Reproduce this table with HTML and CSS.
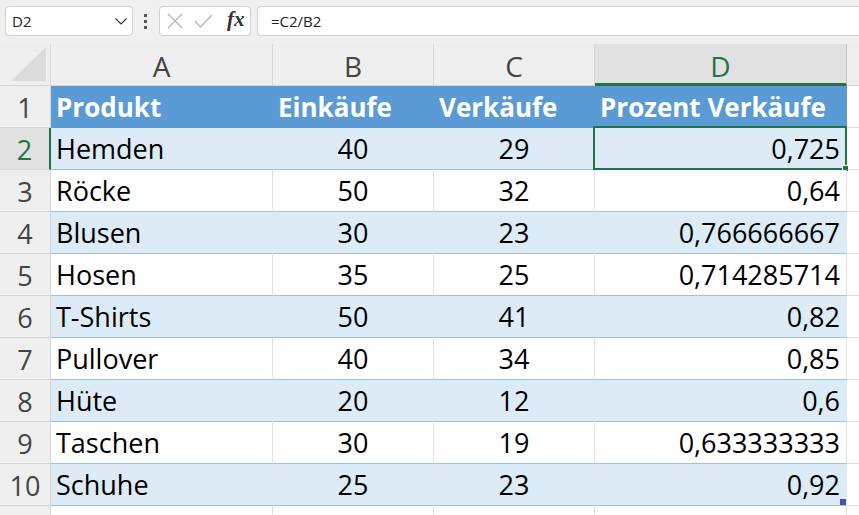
FILE: index.html
```html
<!DOCTYPE html>
<html lang="de">
<head>
<meta charset="utf-8">
<title>Tabelle</title>
<link rel="stylesheet" href="styles.css">
</head>
<body>
<div class="toolbar">
  <div class="namebox">
    <span class="nb-text">D2</span>
    <svg class="chev" width="12" height="7" viewBox="0 0 12 7"><path d="M0.5 0.5 L6 6 L11.5 0.5" fill="none" stroke="#333" stroke-width="1.1"/></svg>
  </div>
  <div class="dots"><i></i><i></i><i></i></div>
  <div class="fxbox">
    <svg class="xicon" width="16" height="16" viewBox="0 0 16 16"><path d="M1 1 L15 15 M15 1 L1 15" stroke="#b5b5b5" stroke-width="1.3" fill="none"/></svg>
    <svg class="check" width="19" height="14" viewBox="0 0 19 14"><path d="M1 7 L6.5 13 L18 1" stroke="#b5b5b5" stroke-width="1.3" fill="none"/></svg>
    <span class="fx">fx</span>
  </div>
  <div class="formula">=C2/B2</div>
</div>

<div class="sheet">
  <div class="corner"><svg width="36" height="35" viewBox="0 0 36 35"><path d="M0 34 L35 34 L35 0 Z" fill="#dcdcdc"/></svg></div>
  <div class="ch">A</div>
  <div class="ch">B</div>
  <div class="ch">C</div>
  <div class="ch sel">D</div>
  <div class="ch end"></div>

  <div class="rh">1</div>
  <div class="c hdr l">Produkt</div>
  <div class="c hdr l">Einkäufe</div>
  <div class="c hdr l">Verkäufe</div>
  <div class="c hdr l">Prozent Verkäufe</div>
  <div class="e"></div>

  <div class="rh sel">2</div>
  <div class="c band l">Hemden</div>
  <div class="c band m">40</div>
  <div class="c band m">29</div>
  <div class="c band r active">0,725<span class="selbox"><span class="handle"></span></span></div>
  <div class="e"></div>

  <div class="rh">3</div>
  <div class="c l">Röcke</div>
  <div class="c m">50</div>
  <div class="c m">32</div>
  <div class="c r">0,64</div>
  <div class="e"></div>

  <div class="rh">4</div>
  <div class="c band l">Blusen</div>
  <div class="c band m">30</div>
  <div class="c band m">23</div>
  <div class="c band r">0,766666667</div>
  <div class="e"></div>

  <div class="rh">5</div>
  <div class="c l">Hosen</div>
  <div class="c m">35</div>
  <div class="c m">25</div>
  <div class="c r">0,714285714</div>
  <div class="e"></div>

  <div class="rh">6</div>
  <div class="c band l">T-Shirts</div>
  <div class="c band m">50</div>
  <div class="c band m">41</div>
  <div class="c band r">0,82</div>
  <div class="e"></div>

  <div class="rh">7</div>
  <div class="c l">Pullover</div>
  <div class="c m">40</div>
  <div class="c m">34</div>
  <div class="c r">0,85</div>
  <div class="e"></div>

  <div class="rh">8</div>
  <div class="c band l">Hüte</div>
  <div class="c band m">20</div>
  <div class="c band m">12</div>
  <div class="c band r">0,6</div>
  <div class="e"></div>

  <div class="rh">9</div>
  <div class="c l">Taschen</div>
  <div class="c m">30</div>
  <div class="c m">19</div>
  <div class="c r">0,633333333</div>
  <div class="e"></div>

  <div class="rh">10</div>
  <div class="c band l">Schuhe</div>
  <div class="c band m">25</div>
  <div class="c band m">23</div>
  <div class="c band r last">0,92<span class="resize"></span></div>
  <div class="e"></div>

  <div class="rh"></div>
  <div class="c empty"></div>
  <div class="c empty"></div>
  <div class="c empty"></div>
  <div class="c empty"></div>
  <div class="e"></div>
</div>
</body>
</html>
```

FILE: styles.css
```css
* { box-sizing: border-box; }
html, body {
  margin: 0;
  padding: 0;
  width: 859px;
  height: 515px;
  overflow: hidden;
  background: #ffffff;
  font-family: "Open Sans", "Liberation Sans", sans-serif;
}

/* ---------- toolbar ---------- */
.toolbar {
  height: 44px;
  background: #f0f0f0;
  display: flex;
  align-items: flex-start;
  padding: 6px 0 0 5px;
}
.namebox {
  width: 128px;
  height: 30px;
  background: #fff;
  border: 1px solid #d2d2d2;
  border-radius: 4px;
  display: flex;
  align-items: center;
  justify-content: space-between;
  padding: 0 5px 0 6px;
}
.nb-text {
  font-size: 15px;
  color: #222;
}
.chev { margin-top: 1px; }
.dots {
  width: 26px;
  height: 30px;
  display: flex;
  flex-direction: column;
  align-items: center;
  justify-content: center;
  gap: 3px;
  padding-right: 2px;
}
.dots i {
  width: 3px;
  height: 3px;
  background: #555;
  display: block;
}
.fxbox {
  width: 92px;
  height: 30px;
  background: #fff;
  border: 1px solid #d2d2d2;
  border-radius: 4px;
  display: flex;
  align-items: center;
  padding-left: 7px;
}
.xicon { margin-right: 11px; }
.check { margin-right: 14px; }
.fx {
  font-family: "Liberation Serif", "DejaVu Serif", serif;
  font-style: italic;
  font-weight: 700;
  font-size: 21px;
  color: #333;
  line-height: 1;
  margin-top: -3px;
}
.formula {
  margin-left: 6px;
  flex: 1;
  height: 30px;
  background: #fff;
  border: 1px solid #d2d2d2;
  border-right: none;
  border-radius: 4px 0 0 4px;
  display: flex;
  align-items: center;
  padding-left: 13px;
  font-size: 15px;
  color: #222;
}

/* ---------- sheet ---------- */
.sheet {
  display: grid;
  grid-template-columns: 51px 222px 161px 161px 252px 1fr;
  grid-template-rows: 42px repeat(11, 42px);
}
.corner {
  background: #efefef;
  border-right: 1px solid #d6d6d6;
  border-bottom: 1px solid #d6d6d6;
  display: flex;
  align-items: flex-end;
  justify-content: flex-end;
  padding: 0 3px 3px 0;
}
.corner svg { display: block; }
.ch {
  background: #efefef;
  border-right: 1px solid #d6d6d6;
  border-bottom: 1px solid #d6d6d6;
  display: flex;
  align-items: center;
  justify-content: center;
  font-size: 28px;
  color: #444;
  padding-top: 2px;
}
.ch.sel {
  background: #e1e1e1;
  color: #217346;
  border-right-color: #c4c4c4;
  border-bottom: 3px solid #217346;
  padding-top: 4px;
}
.ch.end { border-right: none; }

.rh {
  background: #efefef;
  border-right: 1px solid #d6d6d6;
  border-bottom: 1px solid #d6d6d6;
  display: flex;
  align-items: center;
  justify-content: center;
  font-size: 27px;
  color: #444;
  padding-top: 1px;
}
.rh.sel {
  background: #e1e1e1;
  color: #217346;
  border-right: 2px solid #217346;
}

.c {
  background: #fff;
  border-right: 1px solid #e1e1e1;
  border-bottom: 1px solid #9bc2e6;
  display: flex;
  align-items: center;
  font-size: 27px;
  color: #000;
  padding: 0 6px 0 5px;
  white-space: nowrap;
  position: relative;
}
.c.l { justify-content: flex-start; }
.c.m { justify-content: center; padding-left: 0; padding-right: 0; }
.c.r { justify-content: flex-end; }
.c.hdr {
  background: #5b9bd5;
  color: #fff;
  font-weight: 700;
  font-size: 26px;
  border-right-color: #5b9bd5;
  border-bottom-color: #5b9bd5;
}
.c.band {
  background: #ddebf7;
  border-right-color: #ddebf7;
}
.c.empty { border-bottom-color: #e1e1e1; }
.e {
  background: #fff;
  border-bottom: 1px solid #e1e1e1;
}

.selbox {
  position: absolute;
  left: -2px;
  top: -2px;
  right: -1px;
  bottom: -1px;
  border: 2px solid #217346;
}
.handle {
  position: absolute;
  right: -4px;
  bottom: -4px;
  width: 7px;
  height: 7px;
  background: #217346;
  border: 1px solid #fff;
}
.resize {
  position: absolute;
  right: 0;
  bottom: 0;
  width: 6px;
  height: 6px;
  background: #3f51b5;
}
```
